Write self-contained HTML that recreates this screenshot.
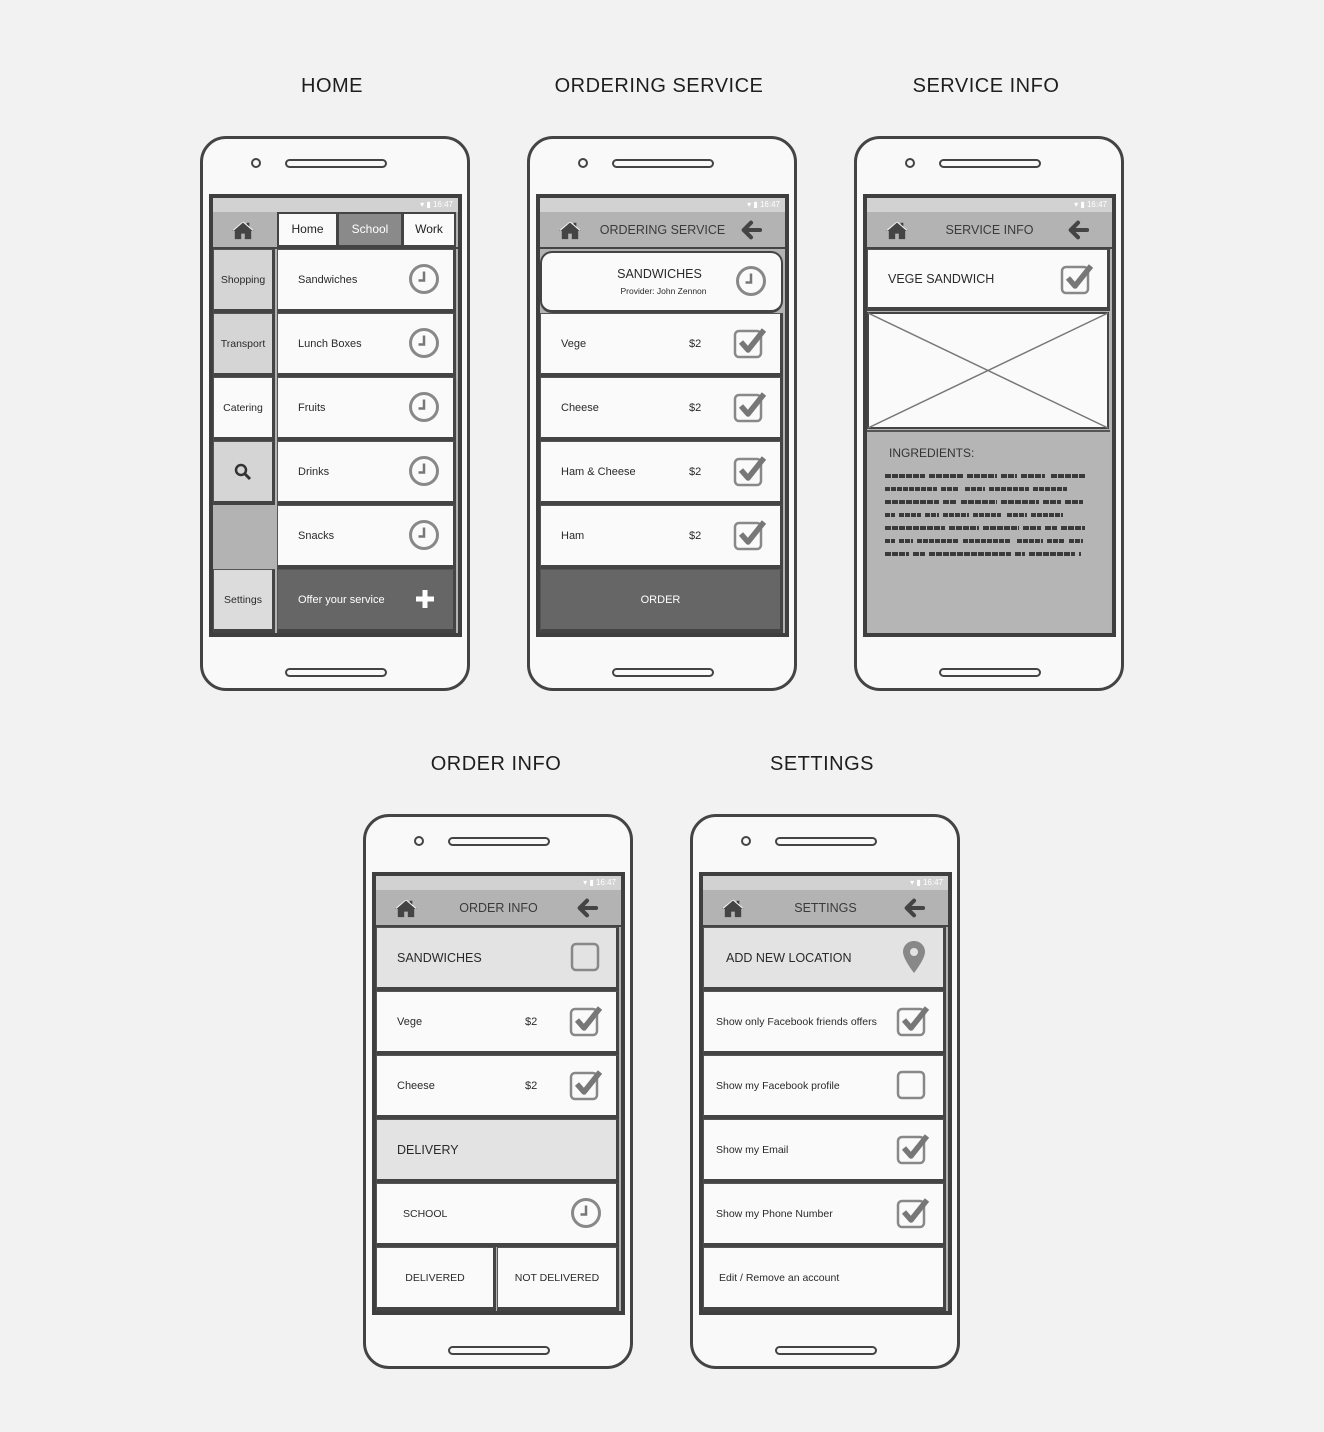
<!DOCTYPE html>
<html><head><meta charset="utf-8">
<style>
*{box-sizing:border-box;margin:0;padding:0}
body{width:1324px;height:1432px;background:#f2f2f2;position:relative;font-family:"Liberation Sans",sans-serif;overflow:hidden}
.t{position:absolute;font-size:20px;color:#1e1e1e;letter-spacing:.5px;transform:translateX(-50%);white-space:nowrap}
.ph{position:absolute;width:270px;height:555px;border:3px solid #444;border-radius:26px;background:#f9f9f9}
.cam{position:absolute;left:48px;top:19px;width:10px;height:10px;border:2px solid #444;border-radius:50%}
.spk{position:absolute;left:82px;width:102px;height:9px;border:2px solid #444;border-radius:6px}
.s{position:absolute;left:6px;top:55px;width:253px;height:443px;border:4px solid #3f3f3f;background:#b3b3b3;overflow:hidden}
.sb{position:absolute;left:0;top:0;width:100%;height:14px;background:#d2d2d2;color:#fff;font-size:8px;text-align:right;padding-right:5px;line-height:14px}
.hd{position:absolute;left:0;top:14px;width:100%;height:37px;background:#b3b3b3;border-bottom:2px solid #444}
.ht{position:absolute;top:11px;left:0;width:100%;text-align:center;font-size:12.5px;color:#3a3a3a}
.c{position:absolute;background:#fafafa;border:1px solid #555;border-bottom:4px solid #444;border-right:3px solid #444;font-size:11px;color:#2a2a2a;display:flex;align-items:center;padding-left:20px;white-space:nowrap}
.g{background:#e3e3e3}
.lc{justify-content:center;padding-left:0;font-size:10.5px;background:#d5d5d5}
.ic{position:absolute}
.pr{position:absolute;left:148px}
</style></head><body>
<svg width="0" height="0" style="position:absolute">
<defs>
<symbol id="clk" viewBox="0 0 32 32"><circle cx="16" cy="16" r="13.5" fill="none" stroke="#888" stroke-width="3"/><path d="M16 8.5V17.5H10.5" fill="none" stroke="#777" stroke-width="2.5"/></symbol>
<symbol id="chk" viewBox="0 0 36 34"><rect x="2" y="6" width="26" height="26" rx="4" fill="none" stroke="#888" stroke-width="2.5"/><path d="M8 17l7 8L31 5" fill="none" stroke="#777" stroke-width="5.5" stroke-linejoin="round"/></symbol>
<symbol id="box" viewBox="0 0 36 34"><rect x="4" y="4" width="26" height="26" rx="4" fill="none" stroke="#888" stroke-width="2.5"/></symbol>
<symbol id="home" viewBox="0 0 24 22"><path d="M12 1L0 12h3v9h7v-6h4v6h7v-9h3L19 8.5V3h-3v2.8z" fill="#444"/><path d="M1 11.5L12 2l11 9.5" fill="none" stroke="#f2f2f2" stroke-width="1.2"/></symbol>
<symbol id="arr" viewBox="0 0 24 22"><path d="M22 11H6M12 3l-8 8 8 8" fill="none" stroke="#444" stroke-width="4.5" stroke-linecap="round" stroke-linejoin="round"/></symbol>
<symbol id="pin" viewBox="0 0 24 34"><path d="M12 1C6 1 1 5.5 1 12c0 7 11 21 11 21s11-14 11-21C23 5.5 18 1 12 1z" fill="#888"/><circle cx="12" cy="12" r="4" fill="#e3e3e3"/></symbol>
</defs></svg>

<div class="t" style="left:332px;top:75px">HOME</div>
<div class="t" style="left:659px;top:75px">ORDERING SERVICE</div>
<div class="t" style="left:986px;top:75px">SERVICE INFO</div>
<div class="t" style="left:496px;top:753px">ORDER INFO</div>
<div class="t" style="left:822px;top:753px">SETTINGS</div>

<!-- HOME -->
<div class="ph" style="left:200px;top:136px">
<div class="cam"></div><div class="spk" style="top:20px"></div><div class="spk" style="top:529px"></div>
<div class="s">
<div class="sb">▾ ▮ 16:47</div>
<div class="hd"><svg class="ic" style="left:19px;top:8px" width="22" height="20"><use href="#home"/></svg>
<div style="position:absolute;left:64px;top:0;width:61px;height:35px;background:#fafafa;border:2px solid #444;font-size:12px;text-align:center;line-height:31px;color:#222">Home</div>
<div style="position:absolute;left:124px;top:0;width:66px;height:35px;background:#8a8a8a;border:2px solid #444;font-size:12px;text-align:center;line-height:31px;color:#fff">School</div>
<div style="position:absolute;left:189px;top:0;width:54px;height:35px;background:#fafafa;border:2px solid #444;font-size:12px;text-align:center;line-height:31px;color:#222">Work</div></div>
<div class="c lc" style="left:0;top:51px;width:62px;height:64px">Shopping</div>
<div class="c lc" style="left:0;top:115px;width:62px;height:64px">Transport</div>
<div class="c lc" style="left:0;top:179px;width:62px;height:64px;background:#fafafa">Catering</div>
<div class="c lc" style="left:0;top:243px;width:62px;height:64px"><svg width="18" height="18" viewBox="0 0 18 18"><circle cx="7" cy="7" r="5" fill="none" stroke="#333" stroke-width="2.5"/><path d="M11 11l5 5" stroke="#333" stroke-width="3"/></svg></div>
<div class="c lc" style="left:0;top:371px;width:62px;height:64px;background:#dcdcdc">Settings</div>
<div class="c" style="left:64px;top:51px;width:179px;height:64px">Sandwiches<svg class="ic" style="left:130px;top:13px" width="32" height="32"><use href="#clk"/></svg></div>
<div class="c" style="left:64px;top:115px;width:179px;height:64px">Lunch Boxes<svg class="ic" style="left:130px;top:13px" width="32" height="32"><use href="#clk"/></svg></div>
<div class="c" style="left:64px;top:179px;width:179px;height:64px">Fruits<svg class="ic" style="left:130px;top:13px" width="32" height="32"><use href="#clk"/></svg></div>
<div class="c" style="left:64px;top:243px;width:179px;height:64px">Drinks<svg class="ic" style="left:130px;top:13px" width="32" height="32"><use href="#clk"/></svg></div>
<div class="c" style="left:64px;top:307px;width:179px;height:64px">Snacks<svg class="ic" style="left:130px;top:13px" width="32" height="32"><use href="#clk"/></svg></div>
<div class="c" style="left:64px;top:371px;width:179px;height:64px;background:#666;color:#fff">Offer your service<svg class="ic" style="left:136px;top:18px" width="22" height="22" viewBox="0 0 22 22"><path d="M11 2v18M2 11h18" stroke="#fff" stroke-width="5"/></svg></div>
</div></div>

<!-- ORDERING SERVICE -->
<div class="ph" style="left:527px;top:136px">
<div class="cam"></div><div class="spk" style="top:20px"></div><div class="spk" style="top:529px"></div>
<div class="s">
<div class="sb">▾ ▮ 16:47</div>
<div class="hd"><svg class="ic" style="left:19px;top:8px" width="22" height="20"><use href="#home"/></svg><div class="ht">ORDERING SERVICE</div><svg class="ic" style="left:200px;top:8px" width="22" height="20"><use href="#arr"/></svg></div>
<div class="c" style="left:0;top:53px;width:243px;height:62px;border-radius:12px;justify-content:center;padding-left:0;flex-direction:column;border:2px solid #444;border-bottom-width:3px"><div style="font-size:12.5px;margin-left:-4px">SANDWICHES</div><div style="font-size:8.5px;margin-top:5px;margin-left:4px">Provider: John Zennon</div><svg class="ic" style="left:193px;top:12px" width="32" height="32"><use href="#clk"/></svg></div>
<div class="c" style="left:0;top:115px;width:243px;height:64px">Vege<span class="pr">$2</span><svg class="ic" style="left:192px;top:11px" width="36" height="34"><use href="#chk"/></svg></div>
<div class="c" style="left:0;top:179px;width:243px;height:64px">Cheese<span class="pr">$2</span><svg class="ic" style="left:192px;top:11px" width="36" height="34"><use href="#chk"/></svg></div>
<div class="c" style="left:0;top:243px;width:243px;height:64px">Ham &amp; Cheese<span class="pr">$2</span><svg class="ic" style="left:192px;top:11px" width="36" height="34"><use href="#chk"/></svg></div>
<div class="c" style="left:0;top:307px;width:243px;height:64px">Ham<span class="pr">$2</span><svg class="ic" style="left:192px;top:11px" width="36" height="34"><use href="#chk"/></svg></div>
<div class="c" style="left:0;top:371px;width:243px;height:64px;background:#666;color:#fff;justify-content:center;padding-left:0">ORDER</div>
</div></div>

<!-- SERVICE INFO -->
<div class="ph" style="left:854px;top:136px">
<div class="cam"></div><div class="spk" style="top:20px"></div><div class="spk" style="top:529px"></div>
<div class="s">
<div class="sb">▾ ▮ 16:47</div>
<div class="hd"><svg class="ic" style="left:19px;top:8px" width="22" height="20"><use href="#home"/></svg><div class="ht">SERVICE INFO</div><svg class="ic" style="left:200px;top:8px" width="22" height="20"><use href="#arr"/></svg></div>
<div class="c" style="left:0;top:51px;width:243px;height:62px;font-size:12.5px">VEGE SANDWICH<svg class="ic" style="left:192px;top:11px" width="36" height="34"><use href="#chk"/></svg></div>
<svg class="ic" style="left:0;top:114px" width="243" height="118"><rect x="1" y="1" width="240" height="115" fill="#fafafa" stroke="#444" stroke-width="2"/><path d="M1 1L241 116M241 1L1 116" stroke="#777" stroke-width="1.5"/></svg>
<div style="position:absolute;left:0;top:232px;width:243px;height:205px;background:#b5b5b5;border-top:2px solid #555">
<div style="position:absolute;left:22px;top:14px;font-size:12px;color:#333">INGREDIENTS:</div>
<svg class="ic" style="left:16px;top:42px" width="210" height="90"><g stroke="#3a3a3a" stroke-width="4">
<path d="M2 2h40M46 2h34M84 2h30M118 2h16M138 2h24M168 2h34" stroke-dasharray="6 1"/>
<path d="M2 15h52M58 15h18M82 15h20M106 15h40M150 15h34" stroke-dasharray="5 1"/>
<path d="M2 28h54M60 28h14M78 28h36M118 28h38M160 28h18M182 28h18" stroke-dasharray="6 1"/>
<path d="M2 41h10M16 41h22M42 41h14M60 41h26M90 41h28M124 41h20M148 41h32" stroke-dasharray="5 1"/>
<path d="M2 54h60M66 54h30M100 54h36M140 54h18M162 54h12M178 54h24" stroke-dasharray="6 1"/>
<path d="M2 67h10M16 67h14M34 67h42M80 67h48M134 67h26M164 67h18M186 67h14" stroke-dasharray="5 1"/>
<path d="M2 80h24M30 80h12M46 80h82M132 80h10M146 80h46M196 80h2" stroke-dasharray="6 1"/>
</g></svg>
</div>
</div></div>

<!-- ORDER INFO -->
<div class="ph" style="left:363px;top:814px">
<div class="cam"></div><div class="spk" style="top:20px"></div><div class="spk" style="top:529px"></div>
<div class="s">
<div class="sb">▾ ▮ 16:47</div>
<div class="hd"><svg class="ic" style="left:19px;top:8px" width="22" height="20"><use href="#home"/></svg><div class="ht">ORDER INFO</div><svg class="ic" style="left:200px;top:8px" width="22" height="20"><use href="#arr"/></svg></div>
<div class="c g" style="left:0;top:51px;width:243px;height:64px;font-size:12.5px">SANDWICHES<svg class="ic" style="left:191px;top:12px" width="36" height="34"><use href="#box"/></svg></div>
<div class="c" style="left:0;top:115px;width:243px;height:64px">Vege<span class="pr">$2</span><svg class="ic" style="left:192px;top:11px" width="36" height="34"><use href="#chk"/></svg></div>
<div class="c" style="left:0;top:179px;width:243px;height:64px">Cheese<span class="pr">$2</span><svg class="ic" style="left:192px;top:11px" width="36" height="34"><use href="#chk"/></svg></div>
<div class="c g" style="left:0;top:243px;width:243px;height:64px;font-size:12.5px">DELIVERY</div>
<div class="c" style="left:0;top:307px;width:243px;height:64px;font-size:10.5px;padding-left:26px">SCHOOL<svg class="ic" style="left:193px;top:13px" width="32" height="32"><use href="#clk"/></svg></div>
<div class="c" style="left:0;top:371px;width:120px;height:64px;font-size:10.5px;justify-content:center;padding-left:0">DELIVERED</div>
<div class="c" style="left:121px;top:371px;width:122px;height:64px;font-size:10.5px;justify-content:center;padding-left:0">NOT DELIVERED</div>
</div></div>

<!-- SETTINGS -->
<div class="ph" style="left:690px;top:814px">
<div class="cam"></div><div class="spk" style="top:20px"></div><div class="spk" style="top:529px"></div>
<div class="s">
<div class="sb">▾ ▮ 16:47</div>
<div class="hd"><svg class="ic" style="left:19px;top:8px" width="22" height="20"><use href="#home"/></svg><div class="ht">SETTINGS</div><svg class="ic" style="left:200px;top:8px" width="22" height="20"><use href="#arr"/></svg></div>
<div class="c g" style="left:0;top:51px;width:243px;height:64px;font-size:12.5px;padding-left:22px">ADD NEW LOCATION<svg class="ic" style="left:198px;top:12px" width="24" height="34"><use href="#pin"/></svg></div>
<div class="c" style="left:0;top:115px;width:243px;height:64px;padding-left:12px;font-size:10.5px">Show only Facebook friends offers<svg class="ic" style="left:192px;top:11px" width="36" height="34"><use href="#chk"/></svg></div>
<div class="c" style="left:0;top:179px;width:243px;height:64px;padding-left:12px;font-size:10.5px">Show my Facebook profile<svg class="ic" style="left:190px;top:12px" width="36" height="34"><use href="#box"/></svg></div>
<div class="c" style="left:0;top:243px;width:243px;height:64px;padding-left:12px;font-size:10.5px">Show my Email<svg class="ic" style="left:192px;top:11px" width="36" height="34"><use href="#chk"/></svg></div>
<div class="c" style="left:0;top:307px;width:243px;height:64px;padding-left:12px;font-size:10.5px">Show my Phone Number<svg class="ic" style="left:192px;top:11px" width="36" height="34"><use href="#chk"/></svg></div>
<div class="c" style="left:0;top:371px;width:243px;height:64px;padding-left:15px;font-size:10.5px">Edit / Remove an account</div>
</div></div>
</body></html>
